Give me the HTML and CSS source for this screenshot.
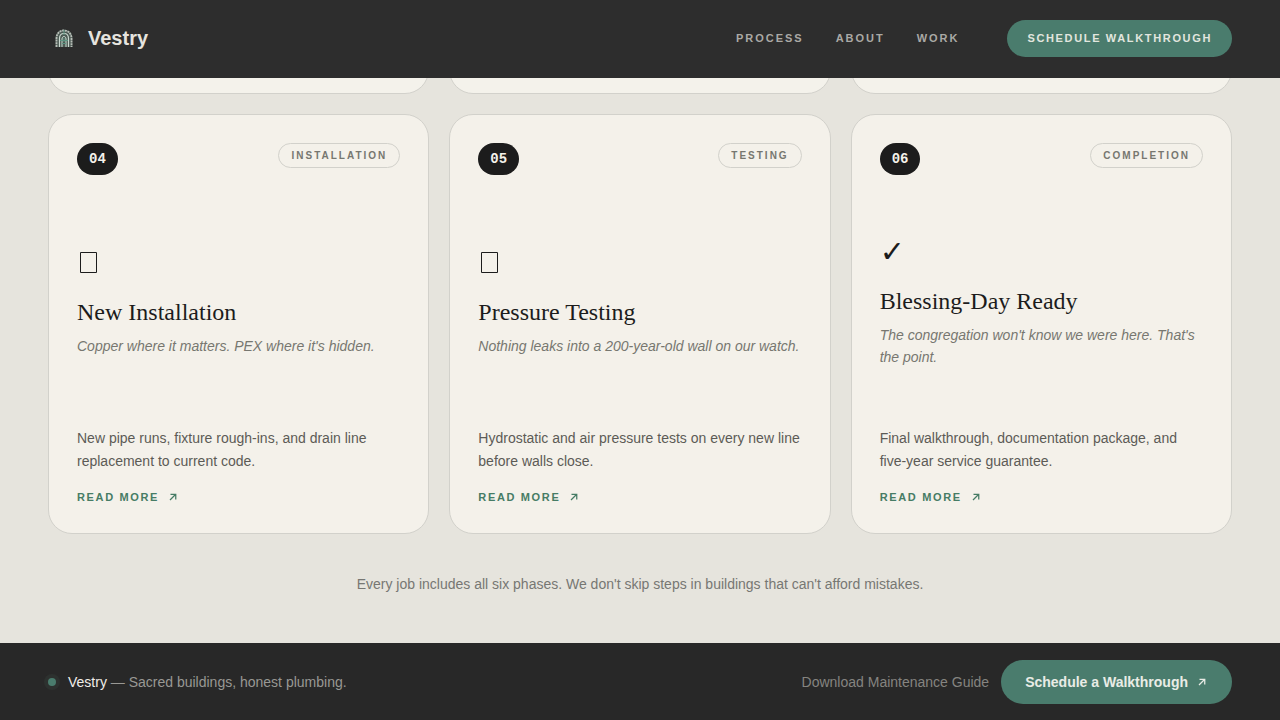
FILE: index.html
```
<!DOCTYPE html>
<html lang="en">
<head>
  <meta charset="UTF-8">
  <meta name="viewport" content="width=device-width, initial-scale=1.0">
  <title>Vestry</title>
  <link rel="stylesheet" href="styles.css">
</head>
<body>
  <header class="header">
    <a class="brand" href="#">
      <svg class="brand-logo" viewBox="0 0 32 32" fill="none">
        <path d="M7.500 24V15C7.500 10 11 6.500 16 6.500S24.500 10 24.500 15V24z" fill="#4c5a54"/>
        <path d="M8.500 24v-8.500c0-5 3.300-8 7.500-8s7.500 3 7.500 8V24" stroke="#b9beb8" stroke-width="1.800" stroke-dasharray="2 .7"/>
        <path d="M11.500 24v-8.500c0-3.200 2-5 4.500-5s4.500 1.800 4.500 5V24" stroke="#cad8cf" stroke-width="1.200"/>
        <path d="M14 24v-8c0-1.500.8-2.500 2-2.500s2 1 2 2.500v8" stroke="#c9ddd2" stroke-width="1"/>
        <path d="M16 7v5M16 15v4M12 17.500h8M14 20.500h4" stroke="#5d9482" stroke-width="1"/>
      </svg>
      <span>Vestry</span>
    </a>
    <nav class="nav">
      <a class="nav-link" href="#">Process</a>
      <a class="nav-link" href="#">About</a>
      <a class="nav-link" href="#">Work</a>
      <a class="nav-cta" href="#">Schedule Walkthrough</a>
    </nav>
  </header>

  <main class="main">
    <!-- end of the first row of phases -->
    <div class="grid">
      <div class="card-end"></div>
      <div class="card-end"></div>
      <div class="card-end"></div>
    </div>

    <div class="grid">
      <article class="card">
        <div class="card-top">
          <span class="num">04</span>
          <span class="tag">Installation</span>
        </div>
        <div class="card-mid">
          <div class="icon"><svg width="22" height="38" viewBox="0 0 22 38" fill="none" stroke="#1c1c1c"><path d="M3.500 9.500h16v20h-16z"/></svg></div>
          <h3>New Installation</h3>
          <p class="quote">Copper where it matters. PEX where it's hidden.</p>
        </div>
        <div class="card-bottom">
          <p>New pipe runs, fixture rough-ins, and drain line replacement to current code.</p>
          <a class="more" href="#">Read more <svg class="arrow" viewBox="0 0 24 24"><path d="M6 18L17 7M7 6.500h10.500V17"/></svg></a>
        </div>
      </article>

      <article class="card">
        <div class="card-top">
          <span class="num">05</span>
          <span class="tag">Testing</span>
        </div>
        <div class="card-mid">
          <div class="icon"><svg width="22" height="38" viewBox="0 0 22 38" fill="none" stroke="#1c1c1c"><path d="M3.500 9.500h16v20h-16z"/></svg></div>
          <h3>Pressure Testing</h3>
          <p class="quote">Nothing leaks into a 200-year-old wall on our watch.</p>
        </div>
        <div class="card-bottom">
          <p>Hydrostatic and air pressure tests on every new line before walls close.</p>
          <a class="more" href="#">Read more <svg class="arrow" viewBox="0 0 24 24"><path d="M6 18L17 7M7 6.500h10.500V17"/></svg></a>
        </div>
      </article>

      <article class="card">
        <div class="card-top">
          <span class="num">06</span>
          <span class="tag">Completion</span>
        </div>
        <div class="card-mid">
          <div class="icon">✓</div>
          <h3>Blessing-Day Ready</h3>
          <p class="quote">The congregation won't know we were here. That's the point.</p>
        </div>
        <div class="card-bottom">
          <p>Final walkthrough, documentation package, and five-year service guarantee.</p>
          <a class="more" href="#">Read more <svg class="arrow" viewBox="0 0 24 24"><path d="M6 18L17 7M7 6.500h10.500V17"/></svg></a>
        </div>
      </article>
    </div>

    <p class="note">Every job includes all six phases. We don't skip steps in buildings that can't afford mistakes.</p>
  </main>

  <footer class="footer">
    <div class="status">
      <span class="dot"></span>
      <span><strong>Vestry</strong> — Sacred buildings, honest plumbing.</span>
    </div>
    <div class="actions">
      <a class="guide" href="#">Download Maintenance Guide</a>
      <a class="cta" href="#">Schedule a Walkthrough <svg class="arrow" viewBox="0 0 24 24"><path d="M6 18L17 7M7 6.500h10.500V17"/></svg></a>
    </div>
  </footer>
</body>
</html>
```
FILE: styles.css
```
* {
  box-sizing: border-box;
}
body {
  margin: 0;
  height: 720px;
  display: flex;
  flex-direction: column;
  overflow: hidden;
  background: #e6e4dd;
  color: #1c1c1c;
  font-family: "Liberation Sans", Arial, sans-serif;
}
a {
  color: inherit;
  text-decoration: none;
}
h3, p {
  margin: 0;
}
.header {
  height: 78px;
  flex-shrink: 0;
  display: flex;
  align-items: center;
  justify-content: space-between;
  padding: 0 48px 1px;
  background: #2d2d2d;
}
.brand {
  display: flex;
  align-items: center;
  gap: 8px;
  color: #e6e4df;
  font-size: 20px;
  font-weight: bold;
}
.brand-logo {
  width: 32px;
  height: 32px;
}
.nav {
  display: flex;
  align-items: center;
  gap: 32px;
  color: #aaa9a5;
  font-size: 11px;
  font-weight: bold;
  line-height: 13px;
  letter-spacing: 1.98px;
  text-transform: uppercase;
}
.nav-cta {
  margin-left: 16px;
  padding: 12px 20px;
  border-radius: 999px;
  background: #4a7c6d;
  color: #e2e6df;
  letter-spacing: 1.65px;
}
.main {
  flex: 1;
  padding: 0 48px;
}
.grid {
  display: grid;
  grid-template-columns: repeat(3, 1fr);
  gap: 20px;
  margin-bottom: 20px;
}
.card-end {
  height: 16px;
  overflow: hidden;
  display: flex;
  align-items: flex-end;
}
.card-end::before {
  content: "";
  flex: 1;
  height: 60px;
  border: 1px solid #d2d1cb;
  border-radius: 24px;
  background: #f4f2eb;
}
.card {
  height: 420px;
  display: flex;
  flex-direction: column;
  justify-content: space-between;
  padding: 28px;
  border: 1px solid #d2d1cb;
  border-radius: 24px;
  background: #f4f1ea;
}
.card-top {
  display: flex;
  align-items: flex-start;
  justify-content: space-between;
}
.num {
  padding: 8px 12px;
  border-radius: 999px;
  background: #1c1c1c;
  color: #f4f1ea;
  font: bold 14px/16px "Liberation Mono", monospace;
}
.tag {
  padding: 6px 12px;
  border: 1px solid #d2d1cb;
  border-radius: 999px;
  color: #777770;
  font-size: 10px;
  font-weight: bold;
  line-height: 11px;
  letter-spacing: 2px;
  text-transform: uppercase;
}
.card-mid {
  margin-bottom: 2px;
}
.icon {
  height: 38px;
  margin-bottom: 17px;
  font: 30px/40px "DejaVu Sans", sans-serif;
}
.icon svg {
  display: block;
}
.card-mid h3 {
  margin-bottom: 9px;
  font: 24px/28px "Liberation Serif", serif;
}
.quote {
  color: #777770;
  font-size: 14px;
  font-style: italic;
  line-height: 22.4px;
}
.card-bottom {
  color: #5c5b56;
  font-size: 14px;
  line-height: 23px;
}
.more {
  display: flex;
  align-items: center;
  gap: 8px;
  margin-top: 16px;
  color: #467c65;
  font-size: 11px;
  font-weight: bold;
  line-height: 16px;
  letter-spacing: 1.65px;
  text-transform: uppercase;
}
.arrow {
  width: 12px;
  height: 12px;
  fill: none;
  stroke: currentColor;
  stroke-width: 2.5;
}
.note {
  margin-top: 42px;
  color: #777773;
  font-size: 14px;
  line-height: 16px;
  text-align: center;
}
.footer {
  height: 77px;
  flex-shrink: 0;
  display: flex;
  align-items: center;
  justify-content: space-between;
  padding: 0 48px;
  background: #282828;
  color: #999894;
  font-size: 14px;
}
.status {
  display: flex;
  align-items: center;
  gap: 12px;
}
.status strong {
  color: #f0eee8;
  font-weight: normal;
}
.dot {
  width: 8px;
  height: 8px;
  border-radius: 50%;
  background: #4a7c6d;
  box-shadow: 0 0 0 4px #2d312f;
}
.actions {
  display: flex;
  align-items: center;
  gap: 12px;
}
.guide {
  color: #858480;
}
.cta {
  height: 44px;
  display: flex;
  align-items: center;
  gap: 8px;
  padding: 0 24px;
  border-radius: 999px;
  background: #4a7c6d;
  color: #e9ece6;
  font-weight: bold;
}
```
